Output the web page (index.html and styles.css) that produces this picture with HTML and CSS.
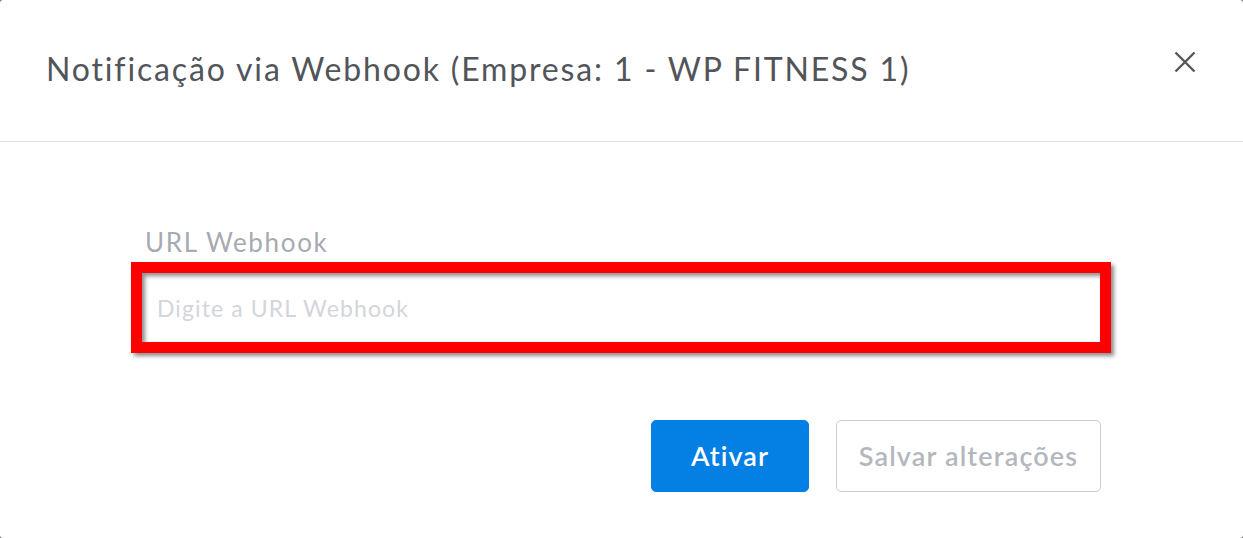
FILE: index.html
```html
<!DOCTYPE html>
<html lang="pt">
<head>
<meta charset="utf-8">
<title>Notificação via Webhook</title>
<link rel="stylesheet" href="styles.css">
</head>
<body>
<div class="modal">
  <header class="modal-header">
    <h1 class="modal-title">Notificação via Webhook (Empresa: 1 - WP FITNESS 1)</h1>
    <button class="close-btn" aria-label="Fechar">
      <svg width="22" height="22" viewBox="0 0 22 22"><path d="M1.5 1.5 L20.5 20.5 M20.5 1.5 L1.5 20.5" stroke="#54585d" stroke-width="2.4" fill="none"/></svg>
    </button>
  </header>
  <section class="modal-body">
    <label class="field-label" for="url">URL Webhook</label>
    <div class="highlight">
      <input id="url" class="field-input" type="text" placeholder="Digite a URL Webhook">
    </div>
    <div class="actions">
      <button class="btn btn-primary">Ativar</button>
      <button class="btn btn-outline">Salvar alterações</button>
    </div>
  </section>
</div>
</body>
</html>
```
FILE: styles.css
```css
* { box-sizing: border-box; }
html, body { margin: 0; padding: 0; }
body {
  background: #6b6b6b;
  font-family: Lato, "Noto Sans", sans-serif;
  width: 1243px;
  height: 538px;
  overflow: hidden;
}
.modal {
  width: 1243px;
  height: 538px;
  background: #ffffff;
  border-radius: 3px;
}
.modal-header {
  height: 142px;
  border-bottom: 1px solid #dfe2e6;
  display: flex;
  align-items: center;
  justify-content: space-between;
  padding: 0 47px 0 46px;
}
.modal-title {
  margin: 0;
  padding-bottom: 4px;
  font-weight: 400;
  font-size: 32px;
  letter-spacing: 1.85px;
  color: #51555a;
}
.close-btn {
  border: 0;
  background: transparent;
  padding: 0;
  width: 22px;
  height: 22px;
  margin-bottom: 17px;
  display: flex;
}
.modal-body {
  padding: 85px 132px 0 131px;
  display: flex;
  flex-direction: column;
}
.field-label {
  margin-left: 14px;
  font-size: 26px;
  letter-spacing: 1.65px;
  line-height: 30px;
  color: #a7aab1;
  margin-bottom: 5px;
}
.highlight {
  border: 11px solid #ff0000;
  box-shadow: 3px 3px 4px rgba(0,0,0,0.45), inset 3px 3px 4px rgba(0,0,0,0.45);
  height: 91px;
}
.field-input {
  width: 100%;
  height: 100%;
  border: 0;
  outline: none;
  background: transparent;
  padding: 0 15px;
  font-family: inherit;
  font-size: 23px;
  letter-spacing: 1.1px;
  color: #51555a;
}
.field-input::placeholder { color: #d3d5db; }
.actions {
  margin-top: 67px;
  display: flex;
  justify-content: flex-end;
  gap: 27px;
  padding-right: 10px;
}
.btn {
  height: 72px;
  border-radius: 5px;
  font-family: inherit;
  font-size: 27px;
  padding: 0 0 2px;
}
.btn-primary {
  width: 158px;
  background: #0480e4;
  border: 1px solid #0480e4;
  color: #ffffff;
  font-weight: 600;
  letter-spacing: 1.1px;
}
.btn-outline {
  width: 265px;
  background: #ffffff;
  border: 1px solid #c8cbd0;
  color: #b4b7bd;
  font-weight: 600;
  letter-spacing: 1.15px;
}
```
